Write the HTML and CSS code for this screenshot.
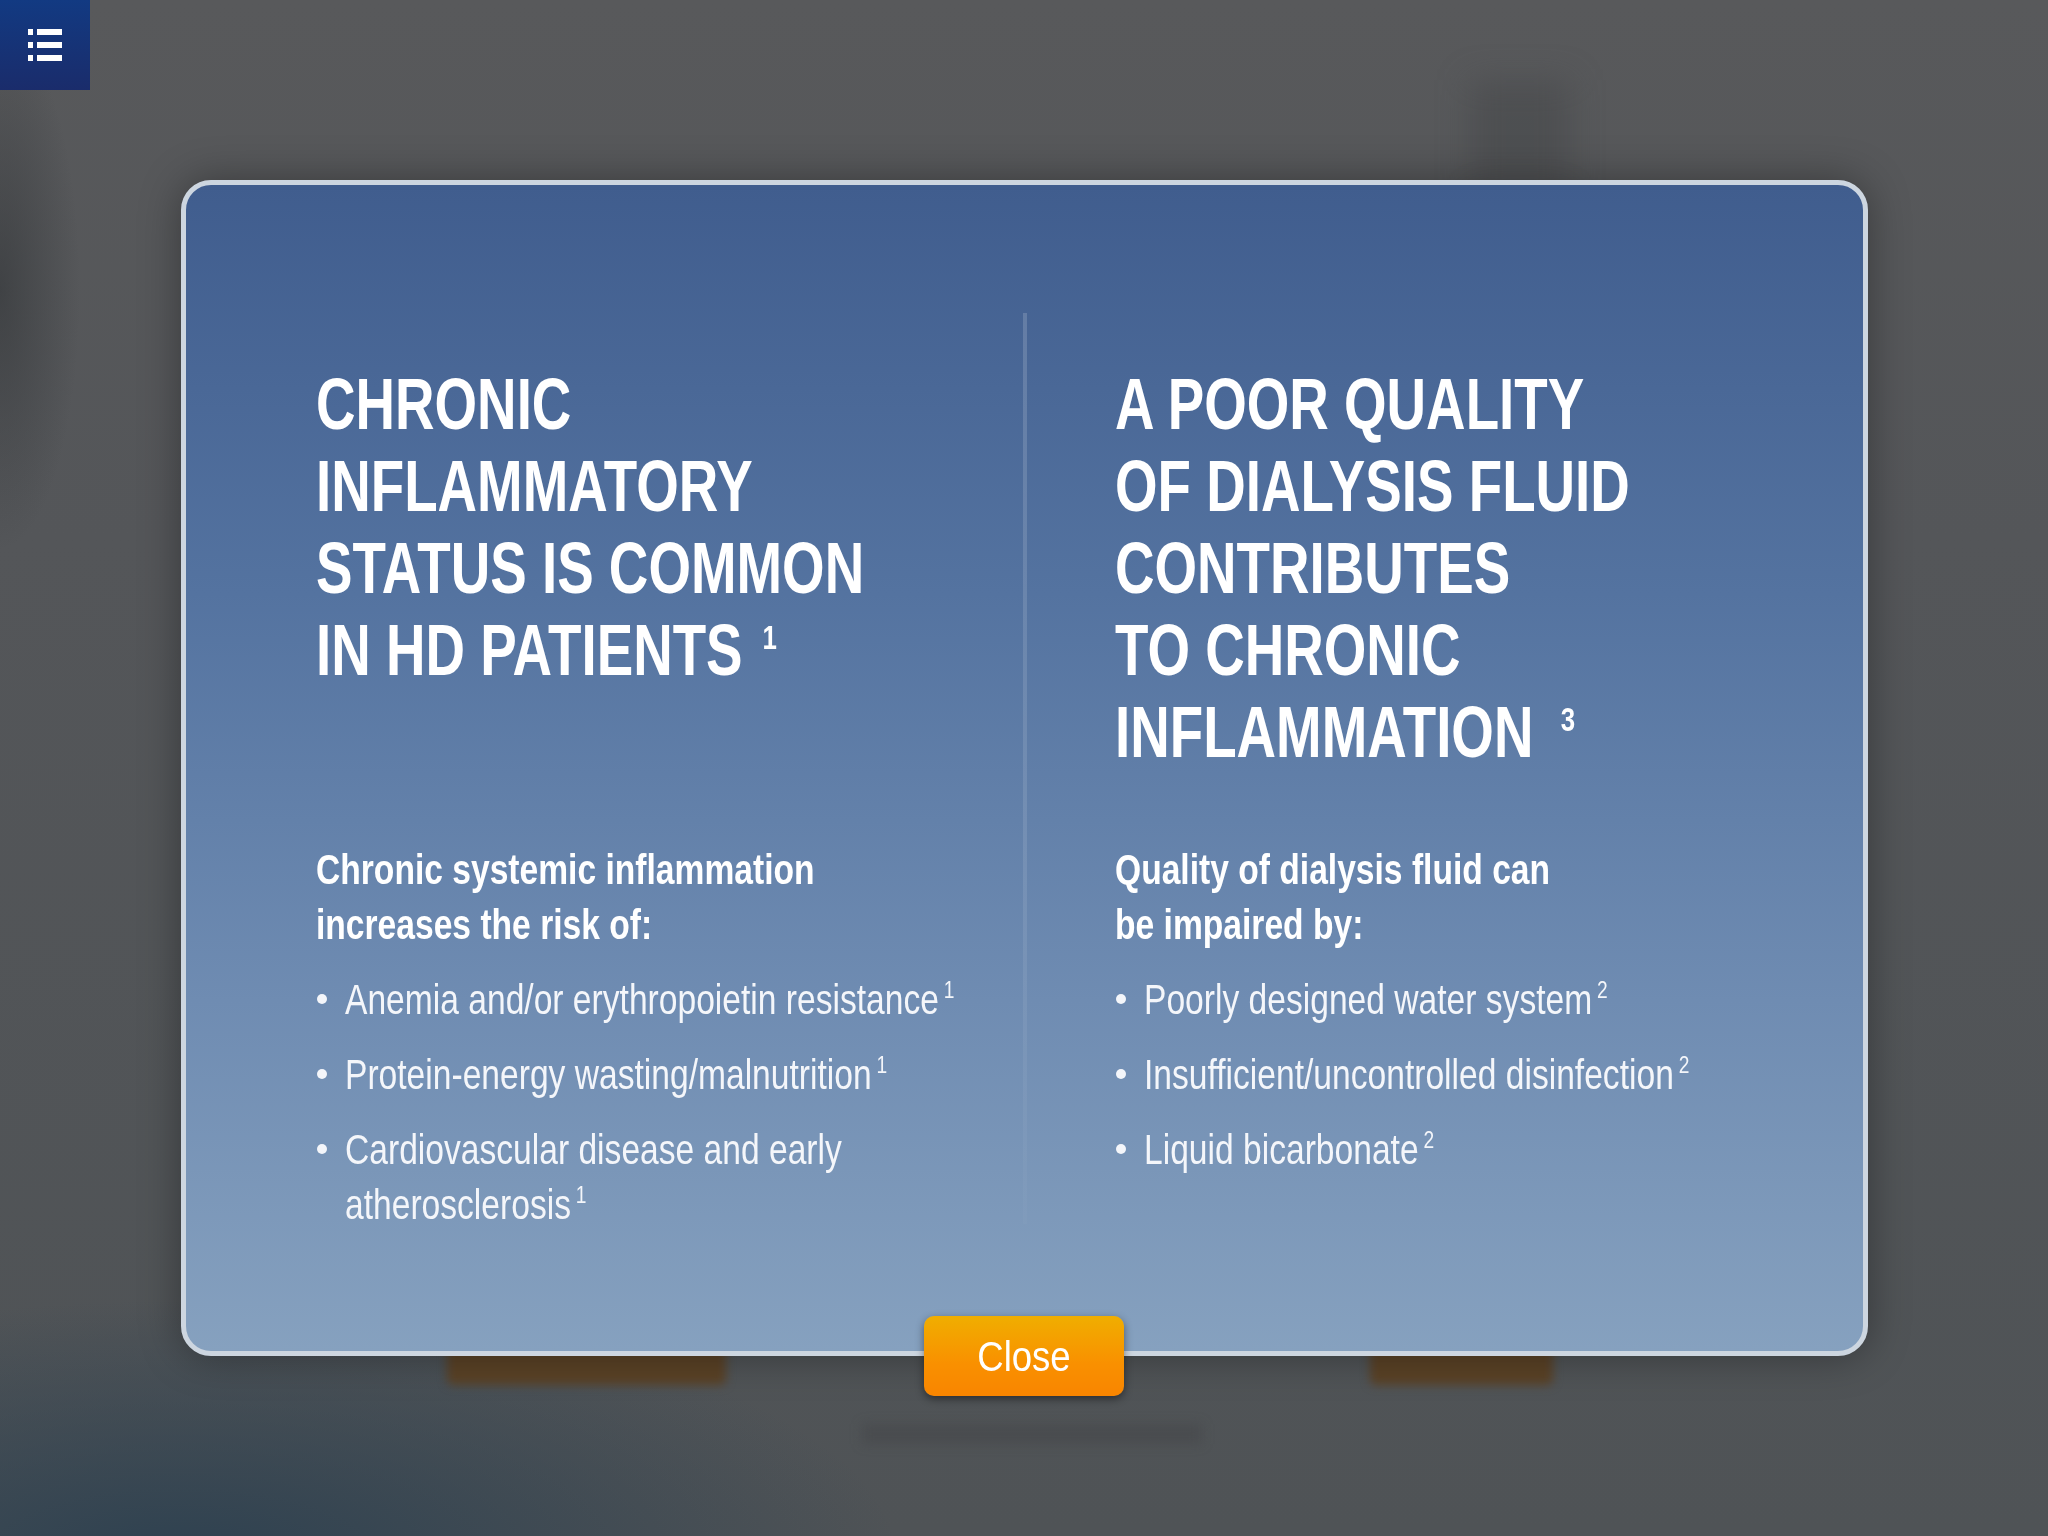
FILE: index.html
```html
<!DOCTYPE html>
<html lang="en">
<head>
<meta charset="utf-8">
<title>Chronic inflammation</title>
<link rel="stylesheet" href="styles.css">
</head>
<body>
<div class="backdrop">
  <div class="blob blob-orange1"></div>
  <div class="blob blob-orange2"></div>
  <div class="blob blob-text"></div>
  <div class="blob blob-tr"></div>
</div>

<button class="menu-btn" aria-label="Menu">
  <svg width="90" height="90" viewBox="0 0 90 90" aria-hidden="true">
    <rect x="28" y="29" width="5" height="6" fill="#fff"/>
    <rect x="37" y="29" width="25" height="6" fill="#fff"/>
    <rect x="28" y="42" width="5" height="6" fill="#fff"/>
    <rect x="37" y="42" width="25" height="6" fill="#fff"/>
    <rect x="28" y="55" width="5" height="6" fill="#fff"/>
    <rect x="37" y="55" width="25" height="6" fill="#fff"/>
  </svg>
</button>

<div class="overlay">
  <div class="modal">
    <div class="columns">
      <section class="col">
        <h2 class="heading"><span class="sx sx-head">CHRONIC<br>INFLAMMATORY<br>STATUS IS COMMON<br>IN HD PATIENTS<sup>1</sup></span></h2>
        <p class="sub"><span class="sx sx-text">Chronic systemic inflammation<br>increases the risk of:</span></p>
        <ul class="list">
          <li><span class="dot"></span><span class="sx sx-text">Anemia and/or erythropoietin resistance<sup>1</sup></span></li>
          <li><span class="dot"></span><span class="sx sx-text">Protein-energy wasting/malnutrition<sup>1</sup></span></li>
          <li><span class="dot"></span><span class="sx sx-text">Cardiovascular disease and early<br>atherosclerosis<sup>1</sup></span></li>
        </ul>
      </section>
      <div class="divider"></div>
      <section class="col">
        <h2 class="heading"><span class="sx sx-head">A POOR QUALITY<br>OF DIALYSIS FLUID<br>CONTRIBUTES<br>TO CHRONIC<br>INFLAMMATION<sup class="sup-wide">3</sup></span></h2>
        <p class="sub"><span class="sx sx-text">Quality of dialysis fluid can<br>be impaired by:</span></p>
        <ul class="list">
          <li><span class="dot"></span><span class="sx sx-text">Poorly designed water system<sup>2</sup></span></li>
          <li><span class="dot"></span><span class="sx sx-text">Insufficient/uncontrolled disinfection<sup>2</sup></span></li>
          <li><span class="dot"></span><span class="sx sx-text">Liquid bicarbonate<sup>2</sup></span></li>
        </ul>
      </section>
    </div>
    <button class="close-btn"><span class="close-label">Close</span></button>
  </div>
</div>
</body>
</html>
```

FILE: styles.css
```css
* { box-sizing: border-box; }
html, body { margin: 0; padding: 0; }
body {
  width: 2048px;
  height: 1536px;
  overflow: hidden;
  position: relative;
  font-family: "Liberation Sans", Arial, sans-serif;
  color: #fff;
  background:
    radial-gradient(ellipse 720px 260px at 180px 1560px, rgba(44,64,80,0.95), rgba(44,64,80,0) 100%),
    radial-gradient(ellipse 80px 260px at 0px 290px, rgba(46,49,52,0.55), rgba(46,49,52,0)),
    linear-gradient(180deg, #58595b 0%, #545659 35%, #4f5356 100%);
}

.backdrop { position: absolute; inset: 0; }
.blob { position: absolute; }
.blob-orange1 { left: 447px; top: 1330px; width: 279px; height: 55px; background: #5a4226; filter: blur(5px); border-radius: 6px; }
.blob-orange2 { left: 1370px; top: 1330px; width: 183px; height: 55px; background: #5a4226; filter: blur(5px); border-radius: 6px; }
.blob-text { left: 862px; top: 1424px; width: 340px; height: 20px; background: rgba(62,64,67,0.35); filter: blur(6px); }
.blob-tr { left: 1470px; top: 80px; width: 100px; height: 110px; background: rgba(66,68,71,0.45); filter: blur(16px); }

.menu-btn {
  position: absolute;
  top: 0; left: 0;
  z-index: 5;
  width: 90px; height: 90px;
  padding: 0; border: none;
  background: linear-gradient(180deg, #123a82 0%, #1a2c6b 100%);
  display: block;
}
.menu-btn svg { display: block; }

.overlay {
  position: absolute;
  inset: 0;
  display: flex;
  align-items: center;
  justify-content: center;
}

.modal {
  position: relative;
  width: 1687px;
  height: 1176px;
  border: 5px solid #cdd6e0;
  border-radius: 30px;
  background: linear-gradient(180deg, #405d8e 0%, #5473a0 35%, #6f8cb2 70%, #86a1bf 100%);
  box-shadow: 0 0 40px rgba(0,0,0,0.35);
  padding: 128px 131px 0 130px;
}

.columns {
  display: grid;
  grid-template-columns: 619px 4px 617px;
  column-gap: 88px;
  align-items: start;
}

.col { padding-top: 50px; min-width: 0; }

.divider {
  height: 911px;
  width: 4px;
  background: linear-gradient(180deg, rgba(255,255,255,0.16) 0%, rgba(255,255,255,0.1) 60%, rgba(255,255,255,0.02) 100%);
}

.sx {
  display: block;
  white-space: nowrap;
  transform-origin: 0 0;
}
.sx-head { transform: scaleX(0.76); }
.sx-text { transform: scaleX(0.8); }

.heading {
  margin: 0 0 69px;
  height: 410px;
  font-size: 72px;
  line-height: 82px;
  font-weight: bold;
}
.heading sup {
  font-size: 34px;
  line-height: 0;
  vertical-align: 26px;
  margin-left: 26px;
  font-weight: bold;
}
.heading sup.sup-wide { margin-left: 36px; }

.sub {
  margin: 0 0 20px;
  font-size: 42px;
  line-height: 55px;
  font-weight: bold;
}

.list {
  list-style: none;
  margin: 0;
  padding: 0;
  display: flex;
  flex-direction: column;
  gap: 20px;
}
.list li {
  display: flex;
  align-items: flex-start;
  font-size: 42px;
  line-height: 55px;
  color: #f4f6fa;
}
.dot {
  flex: none;
  width: 10px; height: 10px;
  border-radius: 50%;
  background: #f4f6fa;
  margin: 22px 18px 0 1px;
}
.list sup {
  font-size: 24px;
  line-height: 0;
  vertical-align: 16px;
  margin-left: 6px;
}

.close-btn {
  position: absolute;
  left: 50%;
  bottom: -45px;
  transform: translateX(-50%);
  width: 200px;
  height: 80px;
  border: none;
  border-radius: 10px;
  padding: 0;
  background: linear-gradient(180deg, #f0ae00 0%, #f99000 60%, #f98500 100%);
  box-shadow: 0 3px 8px rgba(0,0,0,0.45);
  color: #fff;
  font-family: "Liberation Sans", Arial, sans-serif;
  font-size: 43px;
  line-height: 80px;
}
.close-label {
  display: inline-block;
  transform: scaleX(0.85);
}
```
